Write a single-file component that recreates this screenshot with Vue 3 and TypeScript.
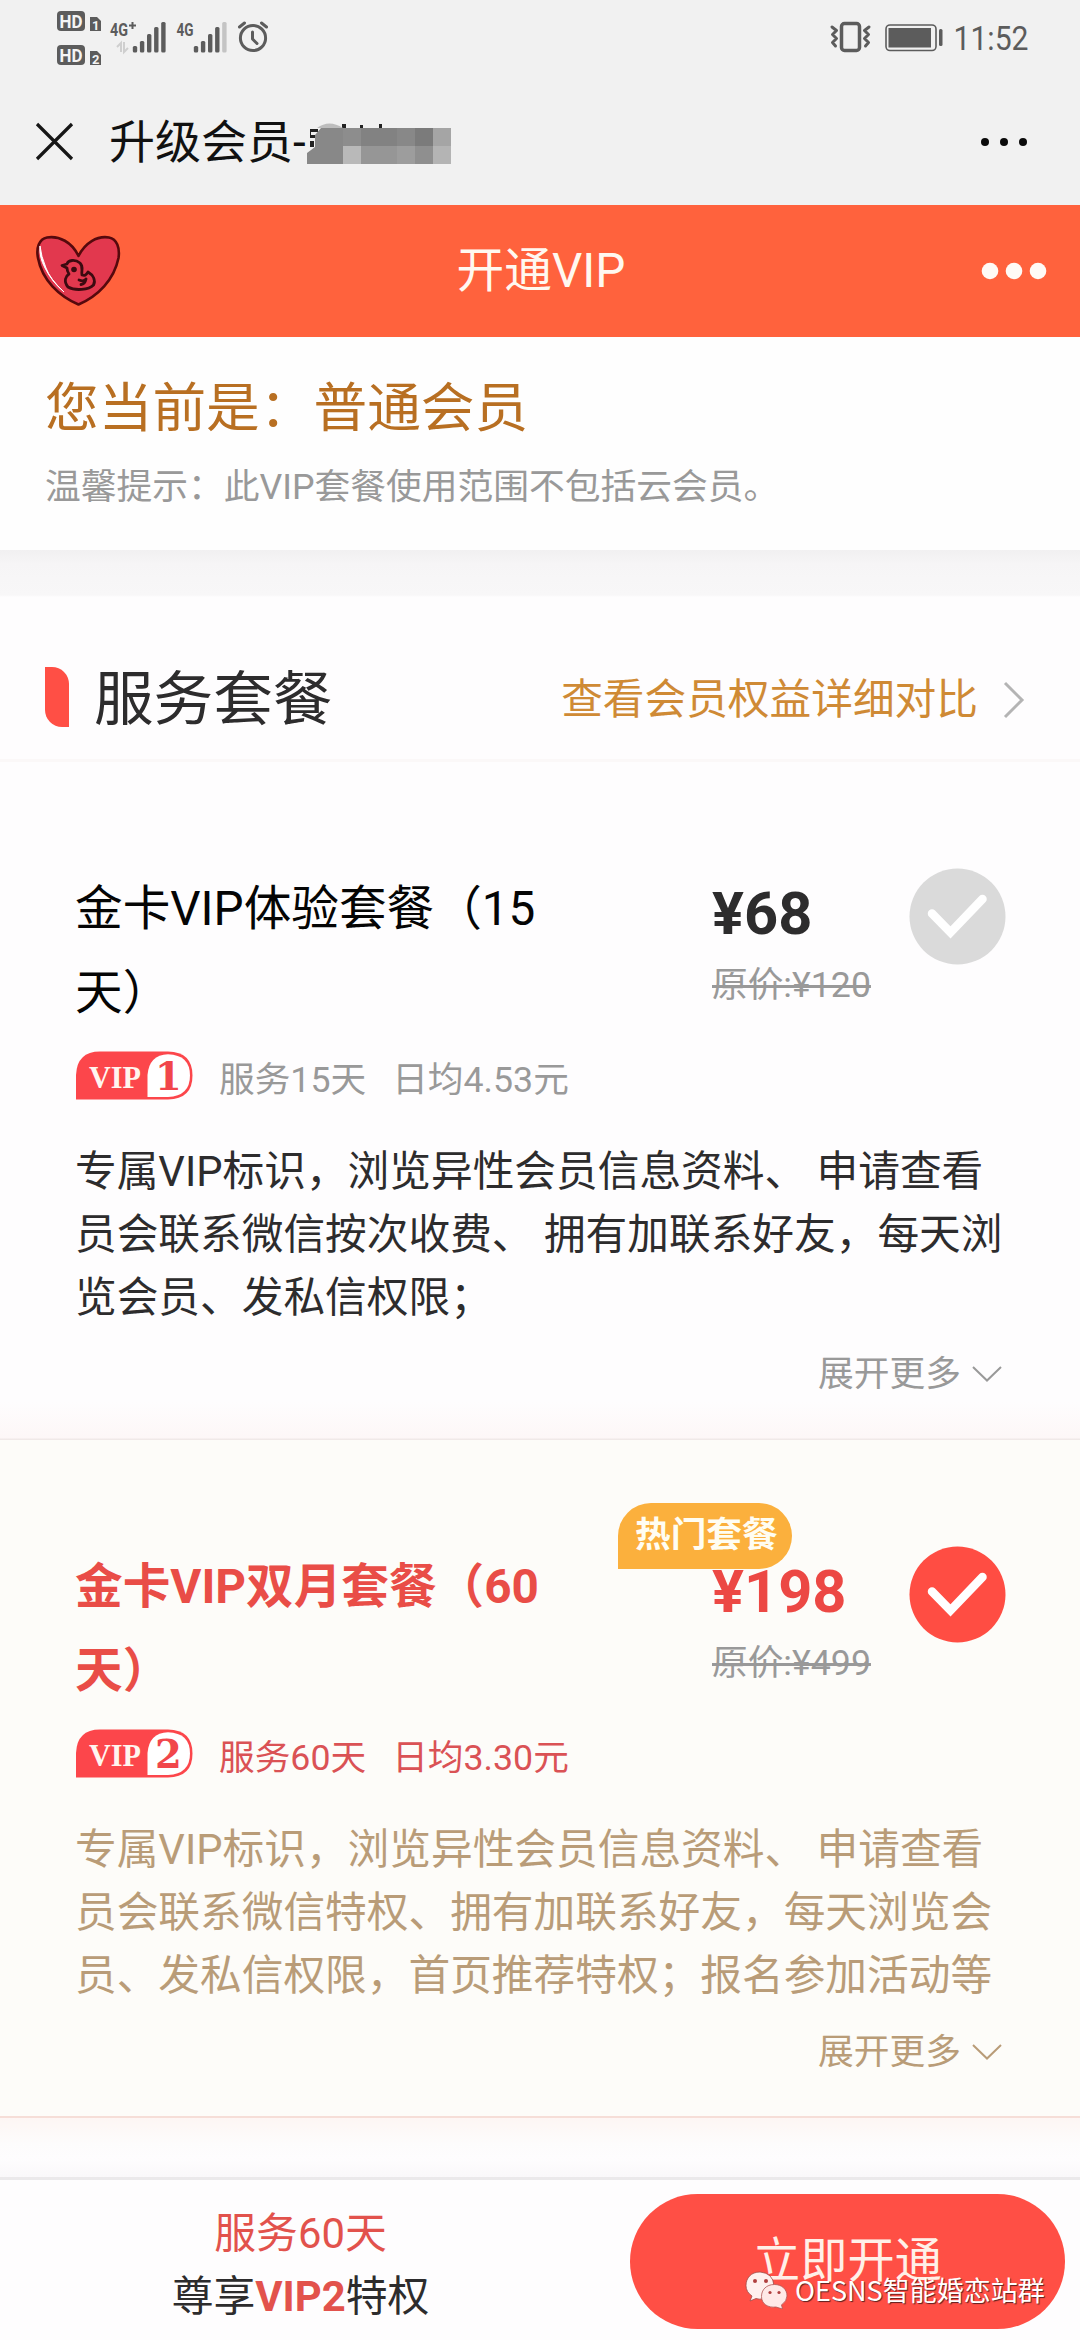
<script setup lang="ts">
interface Plan {
  level: number
  title: string
  days: number
  daily: string
  price: number
  original: number
  lines: string[]
  active: boolean
  hot?: string
}

const plans: Plan[] = [
  {
    level: 1,
    title: '金卡VIP体验套餐（15天）',
    days: 15,
    daily: '4.53',
    price: 68,
    original: 120,
    lines: [
      '专属VIP标识，浏览异性会员信息资料、 申请查看',
      '员会联系微信按次收费、 拥有加联系好友，每天浏',
      '览会员、发私信权限；',
    ],
    active: false,
  },
  {
    level: 2,
    title: '金卡VIP双月套餐（60天）',
    days: 60,
    daily: '3.30',
    price: 198,
    original: 499,
    lines: [
      '专属VIP标识，浏览异性会员信息资料、 申请查看',
      '员会联系微信特权、拥有加联系好友，每天浏览会',
      '员、发私信权限，首页推荐特权；报名参加活动等',
    ],
    active: true,
    hot: '热门套餐',
  },
]

const barTops: number[] = [46, 41, 34, 27, 22]
</script>

<template>
  <div class="page">
    <div class="status">
      <svg class="status-left" width="280" height="80" viewBox="0 0 280 80">
        <g fill="#5c5c5c">
          <rect x="57" y="11" width="28" height="20" rx="4" />
          <rect x="57" y="45" width="28" height="20" rx="4" />
          <path d="M90 17h7l4 4v10h-11z" />
          <path d="M90 51h7l4 4v10h-11z" />
          <g class="hd" fill="#f4f4f4">
            <text x="59.5" y="27.5" textLength="23" lengthAdjust="spacingAndGlyphs">HD</text>
            <text x="59.5" y="61.5" textLength="23" lengthAdjust="spacingAndGlyphs">HD</text>
          </g>
          <g class="sim" fill="#f4f4f4">
            <text x="92" y="30">1</text>
            <text x="92" y="64">2</text>
          </g>
          <g class="net">
            <text x="110" y="35.5" textLength="18" lengthAdjust="spacingAndGlyphs">4G</text>
            <text x="176.5" y="35.5" textLength="17" lengthAdjust="spacingAndGlyphs">4G</text>
          </g>
          <path d="M129 25.500h7M132.500 22v7" fill="none" stroke="#5c5c5c" stroke-width="2" />
          <path d="M117 47l4-4v9M124 42v10l4-4" fill="none" stroke="#cfcfcf" stroke-width="2" />
          <rect v-for="(t, i) in barTops" :key="'a' + i" :x="132.8 + i * 7.1" :y="t" width="4.4" :height="52.5 - t" rx="1.5" />
          <rect
            v-for="(t, i) in barTops"
            :key="'b' + i"
            :x="193.8 + i * 7.1"
            :y="t"
            width="4.4"
            :height="52.5 - t"
            rx="1.5"
            :fill="i === 4 ? '#c4c4c4' : '#5c5c5c'"
          />
        </g>
        <g fill="none" stroke="#5c5c5c" stroke-width="3" stroke-linecap="round" stroke-linejoin="round">
          <circle cx="253" cy="38" r="12.6" />
          <path d="M252.500 32v7l4.500 4.500" />
          <path d="M239.500 27l5-4M266.500 27l-5-4" />
        </g>
      </svg>
      <svg width="220" height="80" viewBox="820 0 220 80">
        <g fill="none" stroke="#5c5c5c" stroke-linejoin="round" stroke-linecap="round">
          <rect x="841.500" y="23.500" width="18" height="27" rx="3" stroke-width="3.500" />
          <path d="M832 27l4.500 3.500-4 4 4 4-4 4 3 3.500M869 27l-4.500 3.500 4 4-4 4 4 4-3 3.500" stroke-width="3" />
          <rect x="886" y="25" width="50" height="25.500" rx="4" stroke-width="1.600" />
        </g>
        <rect x="888.500" y="28" width="42.500" height="19.500" fill="#5c5c5c" />
        <rect x="939" y="29" width="3.500" height="17" rx="1.500" fill="#5c5c5c" />
        <text class="time" x="953.500" y="50" textLength="75" lengthAdjust="spacingAndGlyphs">11:52</text>
      </svg>
    </div>

    <div class="nav">
      <svg class="close" width="40" height="40" viewBox="0 0 40 40">
        <path d="M2 2l35 35M37 2l-35 35" stroke="#161616" stroke-width="3.200" />
      </svg>
      <span class="nav-title">升级会员-</span>
      <svg class="mosaic" width="146" height="46" viewBox="304 119 146 46">
        <path d="M309 127h8v3h-7v3h7v3h-8zM309 139h4v6h-4zM341 122h4v4h-4zM359 123h3v3h-3zM378 122h3v4h-3z" fill="#222" />
        <path d="M306 162v-11l8-6v-12l6-7h22v36z" fill="#888" />
        <path d="M316 126q12-9 26 0z" fill="#bdbdbd" />
        <path d="M342 126h18v18h-18z" fill="#8d8d8d" />
        <path d="M360 126h72v18h-72z" fill="#828282" />
        <path d="M396 126h18v18h-18z" fill="#888" />
        <path d="M414 126h18v18h-18z" fill="#7b7b7b" />
        <path d="M432 126h18v18h-18z" fill="#a5a5a5" />
        <path d="M342 144h18v18h-18z" fill="#b9b9b9" />
        <path d="M360 144h72v18h-72z" fill="#969696" />
        <path d="M396 144h18v18h-18z" fill="#9d9d9d" />
        <path d="M414 144h18v18h-18z" fill="#8f8f8f" />
        <path d="M432 144h18v18h-18z" fill="#b4b4b4" />
      </svg>
      <svg class="nav-more" width="48" height="10" viewBox="0 0 48 10">
        <circle cx="5" cy="5" r="4" /><circle cx="24" cy="5" r="4" /><circle cx="43" cy="5" r="4" />
      </svg>
    </div>

    <header class="header">
      <svg class="logo" width="86" height="72" viewBox="35 236 86 72">
        <path
          d="M78.500 257C72 243 59 236.500 47 238.500C39 240 36 249 38 259C42 281 59 297 78.500 305.500C98 297 114 281 118.500 259C120 249 117 240 109 238.500C97 236.500 85 244 78.500 257Z"
          fill="#e2384e" stroke="#56090d" stroke-width="2.600" stroke-linejoin="round"
        />
        <path d="M40 247q-1 11 5 22q7 14 19 24q-14-13-18-24q-5-12-6-22z" fill="#fff" stroke="#fff" />
        <g fill="none" stroke="#3b0a10" stroke-width="2.800" stroke-linecap="round" stroke-linejoin="round">
          <path d="M67 269l-5-2.500 5-1.500C68 261 75 260 80 264C84 268 81 271 82 276C85 277 86 276 88 273C93 276 96 281 93.500 286C89 291 75 292 68 288C63 282 66 277 69 275Q67 272 67 269Z" />
          <path d="M79 281q5 2 7-1q-1 5-5 5.500" />
        </g>
        <circle cx="74" cy="270.500" r="2.800" fill="#3b0a10" />
      </svg>
      <h1>开通VIP</h1>
      <svg class="header-more" width="66" height="18" viewBox="0 0 66 18">
        <circle cx="9" cy="9" r="8.300" /><circle cx="33" cy="9" r="8.300" /><circle cx="57" cy="9" r="8.300" />
      </svg>
    </header>

    <section class="current">
      <p class="level">您当前是：普通会员</p>
      <p class="tip">温馨提示：此VIP套餐使用范围不包括云会员。</p>
    </section>

    <section class="section-head">
      <i class="mark"></i>
      <h2>服务套餐</h2>
      <a>查看会员权益详细对比</a>
      <svg width="22" height="38" viewBox="0 0 22 38">
        <path d="M2 2l17 17L2 36" fill="none" stroke="#b4b4b4" stroke-width="3" />
      </svg>
    </section>

    <article v-for="p in plans" :key="p.level" class="plan" :class="{ active: p.active }">
      <div class="top">
        <h3>{{ p.title }}</h3>
        <div class="cost">
          <span v-if="p.hot" class="hot">{{ p.hot }}</span>
          <div class="price">¥{{ p.price }}</div>
          <div class="original">原价:¥{{ p.original }}</div>
        </div>
        <svg class="check" width="97" height="97" viewBox="0 0 97 97">
          <circle cx="48.500" cy="48.500" r="48" :fill="p.active ? '#ff4d43' : '#dadada'" />
          <path d="M23 45.500L41.500 64.500L73.500 31" fill="none" stroke="#fff" stroke-width="8.500" stroke-linecap="round" />
        </svg>
      </div>
      <div class="meta">
        <svg width="117" height="49" viewBox="0 0 117 49">
          <path d="M0 48.500V24Q1 0.500 24 0.500H92Q116.500 1 116.500 24.500Q116.500 48 92 48.500Z" fill="#fc464b" />
          <path d="M71.500 46V24Q73 4 92 3.200Q114 4 114 24.500Q114 45 92 46Z" fill="#fff" />
          <text class="vip" x="13" y="36.500" textLength="52" lengthAdjust="spacingAndGlyphs">VIP</text>
          <text class="num" x="92.500" y="38.500" text-anchor="middle">{{ p.level }}</text>
        </svg>
        <span>服务{{ p.days }}天</span>
        <span>日均{{ p.daily }}元</span>
      </div>
      <div class="desc">
        <p v-for="l in p.lines" :key="l">{{ l }}</p>
      </div>
      <div class="more">
        <span>展开更多</span>
        <svg width="32" height="18" viewBox="0 0 32 18">
          <path d="M2 2l14 13.500L30 2" fill="none" stroke="currentColor" stroke-width="2" />
        </svg>
      </div>
    </article>

    <div class="spacer"></div>

    <footer class="footer">
      <div class="summary">
        <p class="red">服务60天</p>
        <p>尊享<b>VIP2</b>特权</p>
      </div>
      <button>立即开通</button>
      <div class="sign">
        <svg width="43" height="38" viewBox="0 0 43 38">
          <path d="M15 1C6 1 1 7 1 14.500Q1 21 7 25L5 30L11 27.500Q14 28.500 18 28Q29 27 29 14.500Q28 2 15 1Z" fill="#fff0ee" stroke="#9e4a48" stroke-width=".8" />
          <path d="M29.500 13.500C21 13.500 16.500 19 16.500 25.500C16.500 33 23 37 31 36L37.500 38L36.500 34Q42 30 42 25C42 18 36.500 13.500 29.500 13.500Z" fill="#ffe9e7" stroke="#b05653" stroke-width=".8" />
          <g fill="#b0403f"><circle cx="10" cy="10" r="2" /><circle cx="21" cy="10" r="2" /><circle cx="25" cy="21.500" r="1.600" /><circle cx="34" cy="21.500" r="1.600" /></g>
        </svg>
        <span>OESNS智能婚恋站群</span>
      </div>
    </footer>
  </div>
</template>

<style>
body {
  margin: 0;
  background: #fff;
}
</style>

<style scoped>
.page {
  width: 1080px;
  height: 2340px;
  display: flex;
  flex-direction: column;
  overflow: hidden;
  background: #fefdfe;
  font-family: Roboto, "Noto Sans CJK SC", sans-serif;
  color: #2d2c2d;
  text-spacing-trim: space-all;
}
.page > * {
  flex-shrink: 0;
  box-sizing: border-box;
}
p, h1, h2, h3 {
  margin: 0;
  font-weight: 400;
  white-space: nowrap;
}
svg {
  display: block;
  flex-shrink: 0;
}
.status {
  height: 80px;
  display: flex;
  justify-content: space-between;
  padding-right: 40px;
  background: #f1f1f1;
}
.hd {
  font-size: 18px;
  font-weight: 700;
}
.sim {
  font-size: 13px;
  font-weight: 700;
}
.net {
  font-size: 19px;
  font-weight: 700;
}
.time {
  font-size: 34px;
  fill: #5c5c5c;
}
.nav {
  height: 125px;
  display: flex;
  align-items: center;
  padding: 0 52px 2px 35px;
  background: #f1f1f1;
}
.nav-title {
  margin-left: 34px;
  width: 196px;
  font-size: 46px;
  line-height: 60px;
  color: #111;
  white-space: nowrap;
}
.mosaic {
  margin-top: 4px;
}
.nav-more {
  margin-left: auto;
  margin-top: 1px;
  fill: #0a0a0a;
}
.header {
  height: 132px;
  display: flex;
  align-items: center;
  justify-content: space-between;
  padding: 0 33px 0 35px;
  background: #ff623d;
}
.header h1 {
  margin-right: 20px;
  font-size: 47.7px;
  line-height: 60px;
  color: #fff8f0;
}
.header-more {
  fill: #fffaf6;
}
.current {
  height: 213px;
  padding: 39px 45px 0;
  background: #fefefe;
}
.level {
  font-size: 53.7px;
  line-height: 66px;
  color: #b86f22;
}
.tip {
  margin-top: 17px;
  font-size: 35.75px;
  line-height: 56px;
  color: #999;
}
.section-head {
  height: 212px;
  display: flex;
  align-items: center;
  padding: 90px 55px 0 45px;
  border-bottom: 3px solid #fbf8f8;
  background: linear-gradient(#f1f0f1, #f6f5f6 14px, #f8f7f8 45px, #fefdfe 47px);
}
.mark {
  width: 24px;
  height: 60px;
  margin-top: -5px;
  background: #ff4f45;
  border-radius: 0 17px 0 17px;
}
.section-head h2 {
  margin-left: 25px;
  font-size: 59.6px;
  line-height: 70px;
}
.section-head a {
  margin-left: auto;
  margin-right: 25px;
  font-size: 41.7px;
  line-height: 60px;
  color: #cf8a35;
}
.plan {
  height: 678px;
  padding: 105px 74px 0 75px;
  background: linear-gradient(#fefdfe 640px, #fdf7f7 676px, #f0e9e8 677px);
}
.plan.active {
  background: #fdfcf9;
  border-bottom: 2px solid #f6ded8;
}
.top {
  display: flex;
  height: 168px;
}
.top h3 {
  width: 480px;
  font-size: 47.65px;
  line-height: 84px;
  color: #050505;
  white-space: normal;
}
.active h3 {
  color: #e94d47;
  font-weight: 700;
}
.cost {
  position: relative;
  width: 196px;
  margin-left: 157px;
}
.price {
  margin-top: 12px;
  font-size: 59.6px;
  line-height: 70px;
  font-weight: 700;
}
.active .price {
  color: #ec4844;
}
.original {
  display: inline-block;
  margin-top: 12px;
  font-size: 35.7px;
  line-height: 48px;
  color: #999;
  text-decoration: line-through;
  text-decoration-thickness: 3px;
}
.hot {
  position: absolute;
  left: -94px;
  top: -42px;
  width: 174px;
  height: 66px;
  box-sizing: border-box;
  padding-left: 17px;
  border-radius: 33px 33px 33px 0;
  background: #fbb03d;
  color: #fffdf2;
  font-size: 35.7px;
  font-weight: 700;
  line-height: 64px;
}
.check {
  margin: 1px 0 0 1px;
}
.meta {
  display: flex;
  align-items: center;
  height: 49px;
  margin-top: 16px;
  padding-left: 1px;
  font-size: 35.7px;
  line-height: 48px;
  color: #999;
}
.meta span {
  margin-left: 26px;
  padding-top: 8px;
  white-space: nowrap;
}
.active .meta {
  color: #da5255;
}
.vip {
  font-family: "Liberation Serif", serif;
  font-size: 32px;
  font-weight: 700;
  fill: #fff5f0;
}
.num {
  font-family: "DejaVu Serif", serif;
  font-size: 38.5px;
  font-weight: 700;
  fill: #f1464b;
}
.desc {
  margin-top: 40px;
  font-size: 41.7px;
  line-height: 63px;
}
.active .desc,
.active .more {
  color: #b99c78;
}
.more {
  display: flex;
  align-items: center;
  justify-content: flex-end;
  margin-top: 18px;
  padding-right: 3px;
  font-size: 35.75px;
  line-height: 54px;
  color: #999;
}
.more svg {
  margin-left: 10px;
}
.spacer {
  height: 59px;
  background: linear-gradient(#fdf6f4, #fdfcfc 26px, #fefdfe 40px, #faf8fa);
}
.footer {
  position: relative;
  flex: 1;
  display: flex;
  padding: 14px 15px 0 0;
  border-top: 3px solid #ebe9eb;
  background: #fefdfe;
}
.summary {
  width: 601px;
  padding-top: 8px;
  text-align: center;
  font-size: 41.8px;
  line-height: 63px;
}
.summary .red,
.summary b {
  color: #e2524c;
}
.footer button {
  width: 435px;
  height: 135px;
  margin-left: 29px;
  padding: 0;
  border: 0;
  border-radius: 68px;
  background: #ff4f45;
  color: #fff0e8;
  font-family: inherit;
  font-size: 47.2px;
  line-height: 135px;
}
.sign {
  position: absolute;
  left: 745px;
  top: 91px;
  display: flex;
  align-items: center;
}
.sign span {
  margin-left: 7px;
  font-family: "Noto Sans CJK SC", sans-serif;
  font-size: 27px;
  line-height: 38px;
  color: #fff;
  text-shadow: 1px 1px 1px #5a2020;
  white-space: nowrap;
}
</style>
